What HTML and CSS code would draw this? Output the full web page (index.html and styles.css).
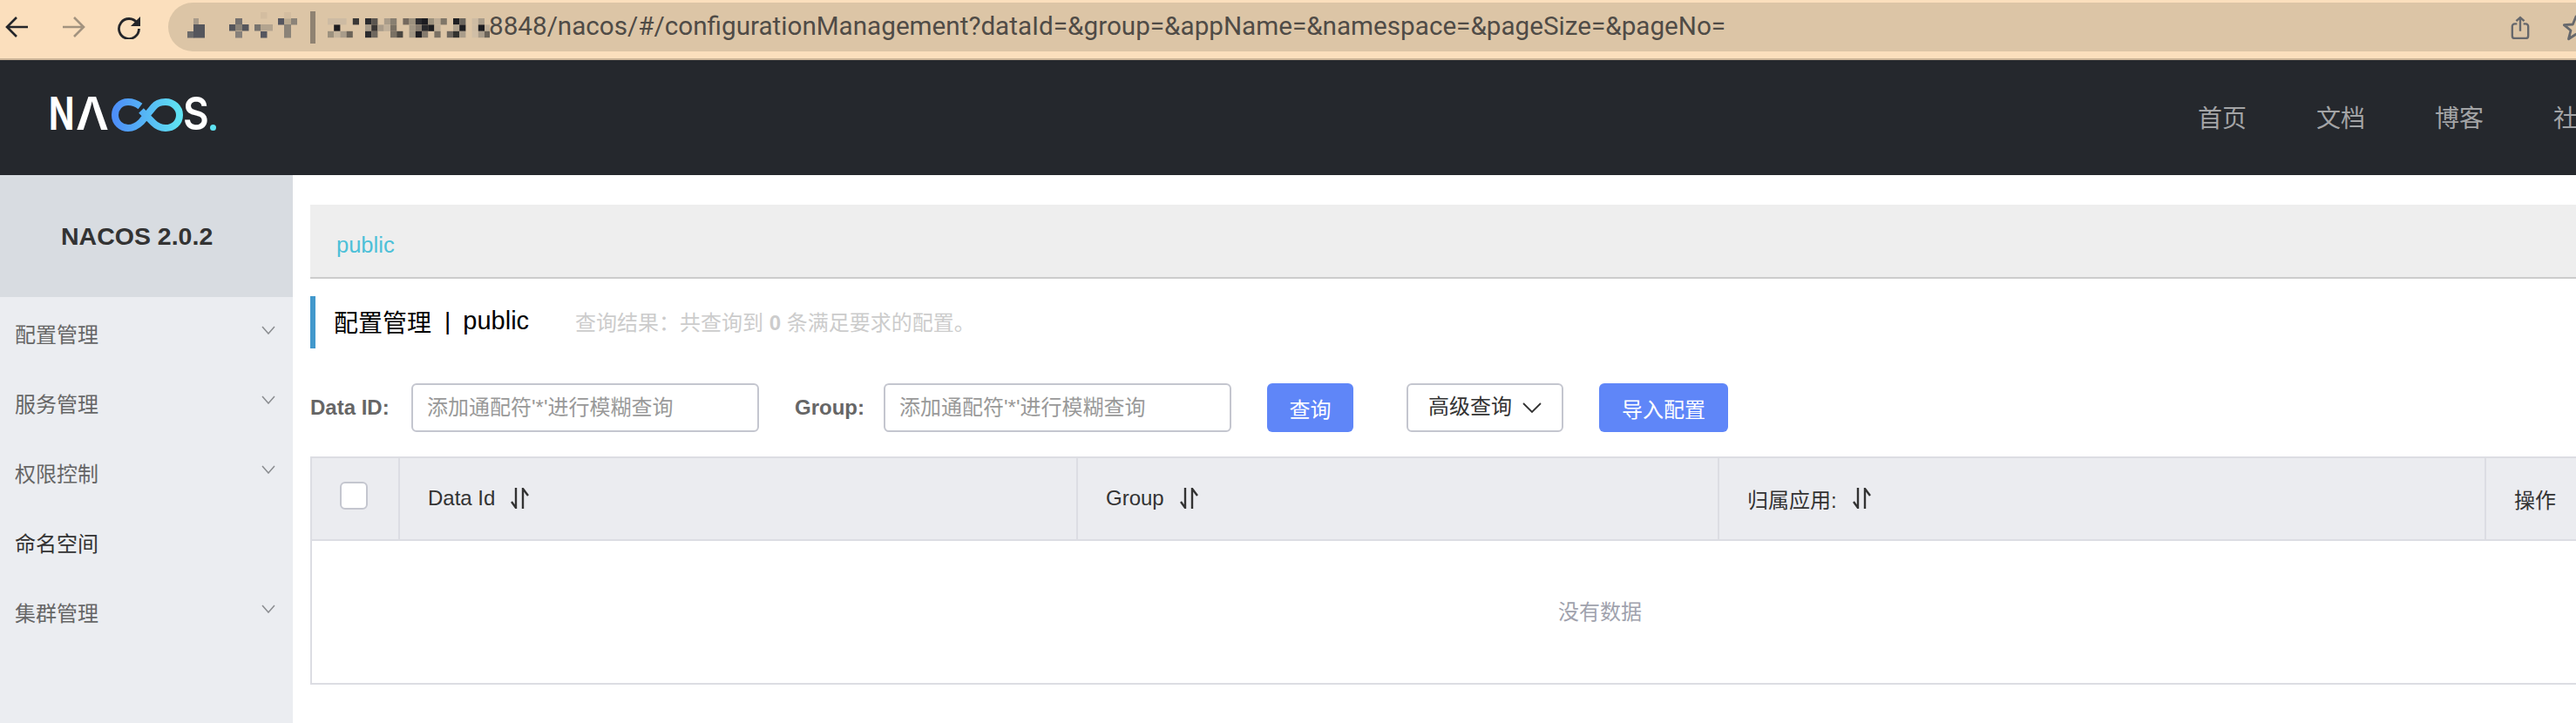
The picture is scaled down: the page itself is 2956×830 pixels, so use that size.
FILE: index.html
```html
<!DOCTYPE html>
<html lang="zh-CN">
<head>
<meta charset="utf-8">
<title>Nacos</title>
<link rel="stylesheet" href="styles.css">
</head>
<body>
<div class="app">
  <div class="browser">
    <div class="nav-icons">
      <svg class="bicon" viewBox="0 0 28 28"><path d="M26 14H2M13 3L2 14l11 11" fill="none" stroke="#25262a" stroke-width="2.6"/></svg>
      <svg class="bicon" viewBox="0 0 28 28"><path d="M2 14h24M15 3l11 11-11 11" fill="none" stroke="#a3937f" stroke-width="2.6"/></svg>
      <svg class="bicon" viewBox="0 0 28 28"><path d="M23.5 9.5A11.5 11.5 0 1 0 25.5 16" fill="none" stroke="#25262a" stroke-width="2.8"/><path d="M27 2v11H16z" fill="#25262a"/></svg>
    </div>
    <div class="omnibox">
      <svg class="mosaic" width="369" height="70" viewBox="193 0 369 70">
        <rect x="215" y="36" width="7.5" height="7.5" fill="#6b6a6a"/><rect x="222" y="21" width="6" height="7.5" fill="#a89b8a"/><rect x="222" y="28" width="13" height="15.5" fill="#55565c"/>
        <rect x="270" y="21" width="8" height="7.5" fill="#74706e"/><rect x="263" y="28" width="7.5" height="7.5" fill="#55565c"/><rect x="270" y="28" width="8" height="7.5" fill="#8b8378"/><rect x="278" y="28" width="7.5" height="7.5" fill="#55565c"/><rect x="270" y="36" width="8" height="7.5" fill="#86807a"/>
        <rect x="292" y="28" width="7.5" height="7.5" fill="#77736e"/><rect x="299" y="28" width="14" height="7.5" fill="#b3a48f"/><rect x="299" y="36" width="7.5" height="7.5" fill="#55565f"/><rect x="299" y="14" width="7.5" height="7.5" fill="#d3bda0"/>
        <rect x="319" y="21" width="7.5" height="7.5" fill="#55565f"/><rect x="326" y="21" width="8" height="7.5" fill="#b8a88f"/><rect x="334" y="21" width="7" height="7.5" fill="#8b8378"/><rect x="326" y="28" width="8" height="15.5" fill="#8b8378"/><rect x="326" y="14" width="8" height="7.5" fill="#d3bda0"/>
        <rect x="356" y="13" width="6" height="37" fill="#8f8272"/>
        <rect x="376" y="21" width="21.6" height="7.4" fill="#cdbba3"/><rect x="404.8" y="21" width="7.2" height="7.4" fill="#3a3837"/><rect x="419" y="21" width="7.2" height="7.4" fill="#2b2b2e"/><rect x="426.2" y="21" width="7.2" height="7.4" fill="#5a554f"/><rect x="440.8" y="21" width="7.2" height="7.4" fill="#a99c8a"/><rect x="448" y="21" width="7.2" height="7.4" fill="#887f71"/><rect x="462.4" y="21" width="7.2" height="7.4" fill="#74695e"/><rect x="469.6" y="21" width="7.2" height="7.4" fill="#9c917e"/><rect x="476.8" y="21" width="7.2" height="7.4" fill="#2b2b2e"/><rect x="484" y="21" width="7.2" height="7.4" fill="#1c1c20"/><rect x="491.2" y="21" width="7.2" height="7.4" fill="#9c917e"/><rect x="498.4" y="21" width="7.2" height="7.4" fill="#bfae97"/><rect x="505.6" y="21" width="7.2" height="7.4" fill="#7f7668"/><rect x="520" y="21" width="7.2" height="7.4" fill="#1f1f22"/><rect x="527.2" y="21" width="7.2" height="7.4" fill="#6b655d"/><rect x="541.6" y="21" width="7.2" height="7.4" fill="#cdbba3"/><rect x="548.8" y="21" width="7.2" height="7.4" fill="#a99c8a"/>
        <rect x="383.2" y="28.4" width="7.2" height="7.4" fill="#1c1c20"/><rect x="419" y="28.4" width="7.2" height="7.4" fill="#a99c8a"/><rect x="426.2" y="28.4" width="7.2" height="7.4" fill="#3a3634"/><rect x="433.4" y="28.4" width="7.2" height="7.4" fill="#a99c8a"/><rect x="440.8" y="28.4" width="7.2" height="7.4" fill="#c0b09a"/><rect x="448" y="28.4" width="7.2" height="7.4" fill="#7a7164"/><rect x="469.6" y="28.4" width="7.2" height="7.4" fill="#a09583"/><rect x="476.8" y="28.4" width="7.2" height="7.4" fill="#857b6e"/><rect x="484" y="28.4" width="7.2" height="7.4" fill="#2a2a2c"/><rect x="491.2" y="28.4" width="7.2" height="7.4" fill="#1e1e22"/><rect x="498.4" y="28.4" width="7.2" height="7.4" fill="#bfae97"/><rect x="520" y="28.4" width="7.2" height="7.4" fill="#b3a48f"/><rect x="527.2" y="28.4" width="7.2" height="7.4" fill="#1f1f22"/><rect x="541.6" y="28.4" width="7.2" height="7.4" fill="#cdbba3"/><rect x="548.8" y="28.4" width="7.2" height="7.4" fill="#1c1c20"/><rect x="556" y="28.4" width="6" height="7.4" fill="#bfae97"/>
        <rect x="376" y="35.8" width="7.2" height="7.4" fill="#9c917e"/><rect x="383.2" y="35.8" width="7.2" height="7.4" fill="#c4b49c"/><rect x="390.4" y="35.8" width="7.2" height="7.4" fill="#a99c8a"/><rect x="397.6" y="35.8" width="7.2" height="7.4" fill="#6b6358"/><rect x="419" y="35.8" width="7.2" height="7.4" fill="#2b2b2e"/><rect x="426.2" y="35.8" width="7.2" height="7.4" fill="#6e675e"/><rect x="448" y="35.8" width="7.2" height="7.4" fill="#7a7164"/><rect x="455.2" y="35.8" width="7.2" height="7.4" fill="#4a4640"/><rect x="469.6" y="35.8" width="7.2" height="7.4" fill="#a09583"/><rect x="476.8" y="35.8" width="7.2" height="7.4" fill="#1e1e22"/><rect x="484" y="35.8" width="7.2" height="7.4" fill="#857b6e"/><rect x="498.4" y="35.8" width="7.2" height="7.4" fill="#7a7164"/><rect x="512.8" y="35.8" width="7.2" height="7.4" fill="#6e675e"/><rect x="520" y="35.8" width="7.2" height="7.4" fill="#33322f"/><rect x="527.2" y="35.8" width="7.2" height="7.4" fill="#a99c8a"/><rect x="541.6" y="35.8" width="7.2" height="7.4" fill="#d0bea6"/><rect x="548.8" y="35.8" width="7.2" height="7.4" fill="#a99c8a"/><rect x="556" y="35.8" width="6" height="7.4" fill="#6b6358"/>
      </svg>
      <span class="url">8848/nacos/#/configurationManagement?dataId=&amp;group=&amp;appName=&amp;namespace=&amp;pageSize=&amp;pageNo=</span>
      <svg class="share" viewBox="0 0 24 30"><path d="M8 10H5a3 3 0 0 0-3 3v12a3 3 0 0 0 3 3h14a3 3 0 0 0 3-3V13a3 3 0 0 0-3-3h-3M12 19V2M7 6.5L12 2l5 4.500" fill="none" stroke="#66686c" stroke-width="2.6"/></svg>
      <svg class="star" viewBox="0 0 30 30"><path d="M15 2l3.700 9.500 10 .6-7.700 6.400 2.500 9.700L15 22.300 6.500 27.700 9 18 1.300 11.600l10-.6z" fill="none" stroke="#66686c" stroke-width="2.800" stroke-linejoin="round"/></svg>
    </div>
  </div>

  <header class="topbar">
    <div class="logo">
      <span class="logo-letter logo-n">N</span>
      <span class="logo-letter logo-a">Λ</span>
      <svg class="logo-inf" viewBox="128 109 82 44">
        <defs><linearGradient id="inf" x1="0" x2="1" y1="0" y2="0"><stop offset="0" stop-color="#4d8ff8"/><stop offset="1" stop-color="#5fe2f2"/></linearGradient></defs>
        <path d="M161 122C157 119 152 117 147 117 138 117 132 124 132 132 132 141 139 147 147 147 153 147 158 144 162 140L176 123C179 119 184 117 190 117 199 117 206 124 206 132 206 141 199 147 190 147 184 147 180 145 176 141L162 127" fill="none" stroke="url(#inf)" stroke-width="8"/>
      </svg>
      <span class="logo-letter logo-s">S</span>
      <span class="logo-dot"></span>
    </div>
    <nav class="topnav">
      <a>首页</a><a>文档</a><a>博客</a><a>社区</a>
    </nav>
  </header>

  <div class="layout">
    <aside class="sidebar">
      <div class="version">NACOS 2.0.2</div>
      <ul class="menu">
        <li class="menu-item"><span>配置管理</span><svg class="chev" viewBox="0 0 16 10"><path d="M1 1l7 8 7-8" fill="none" stroke="#8a8c90" stroke-width="1.500"/></svg></li>
        <li class="menu-item"><span>服务管理</span><svg class="chev" viewBox="0 0 16 10"><path d="M1 1l7 8 7-8" fill="none" stroke="#8a8c90" stroke-width="1.500"/></svg></li>
        <li class="menu-item"><span>权限控制</span><svg class="chev" viewBox="0 0 16 10"><path d="M1 1l7 8 7-8" fill="none" stroke="#8a8c90" stroke-width="1.500"/></svg></li>
        <li class="menu-item leaf"><span>命名空间</span></li>
        <li class="menu-item"><span>集群管理</span><svg class="chev" viewBox="0 0 16 10"><path d="M1 1l7 8 7-8" fill="none" stroke="#8a8c90" stroke-width="1.500"/></svg></li>
      </ul>
    </aside>

    <main class="content">
      <div class="tabs"><span class="tab">public</span></div>
      <div class="title">
        <span class="title-main">配置管理</span><span class="title-sep">|</span><span class="title-ns">public</span>
        <span class="result">查询结果：共查询到 <b>0</b> 条满足要求的配置。</span>
      </div>
      <div class="search">
        <label class="lbl lbl-id">Data ID:</label>
        <div class="field">添加通配符'*'进行模糊查询</div>
        <label class="lbl lbl-group">Group:</label>
        <div class="field">添加通配符'*'进行模糊查询</div>
        <button class="btn primary btn-query">查询</button>
        <button class="btn normal btn-adv"><span class="adv-text">高级查询</span><svg class="adv-chev" viewBox="0 0 22 12"><path d="M1 1l10 10L21 1" fill="none" stroke="#333" stroke-width="1.800"/></svg></button>
        <button class="btn primary btn-import">导入配置</button>
      </div>
      <div class="table">
        <div class="thead">
          <div class="th th-check"><span class="checkbox"></span></div>
          <div class="th">Data Id<svg class="sort" viewBox="0 0 21 24"><path d="M6 0v23L1 16M14 24V1l6 8" fill="none" stroke="#333" stroke-width="2.400"/></svg></div>
          <div class="th">Group<svg class="sort" viewBox="0 0 21 24"><path d="M6 0v23L1 16M14 24V1l6 8" fill="none" stroke="#333" stroke-width="2.400"/></svg></div>
          <div class="th">归属应用:<svg class="sort" viewBox="0 0 21 24"><path d="M6 0v23L1 16M14 24V1l6 8" fill="none" stroke="#333" stroke-width="2.400"/></svg></div>
          <div class="th">操作</div>
        </div>
        <div class="tbody">没有数据</div>
      </div>
    </main>
  </div>
</div>
</body>
</html>
```
FILE: styles.css
```css
* { box-sizing: border-box; }
html, body { margin: 0; padding: 0; height: 830px; overflow: hidden; background: #fff; }
body { font-family: "Liberation Sans", "Noto Sans CJK SC", sans-serif; font-size: 24px; color: #333; }
.app { width: 3314px; height: 830px; display: flex; flex-direction: column; }

.browser { height: 69px; flex: none; display: flex; background: #fbdfbd; border-bottom: 2px solid #c9b296; padding-top: 3px; }
.nav-icons { width: 193px; flex: none; display: flex; gap: 36px; padding: 14px 0 0 6px; align-items: flex-start; }
.bicon { width: 28px; height: 28px; flex: none; }
.omnibox { position: relative; width: 3121px; height: 56px; background: #dcc5a6; border-radius: 28px 0 0 28px; }
.mosaic { position: absolute; left: 0; top: -3px; }
.url { position: absolute; left: 368px; top: 12px; line-height: 30px; font-family: "Roboto", "Liberation Sans", sans-serif; font-size: 29.650px; color: #4f4b46; white-space: nowrap; }
.share { position: absolute; left: 2688px; top: 15px; width: 22px; height: 28px; }
.star { position: absolute; left: 2748px; top: 14px; width: 30px; height: 30px; }

.topbar { height: 132px; flex: none; display: flex; background: #25282d; padding-left: 56px; padding-right: 328px; }
.logo { height: 44px; margin-top: 40px; flex: none; display: flex; }
.logo-letter { display: block; height: 44px; line-height: 44px; font-family: "Inter", "Liberation Sans", sans-serif; font-weight: 600; font-size: 52px; color: #fff; transform-origin: left center; }
.logo-n { width: 28px; font-weight: 700; transform: scaleX(.74); }
.logo-a { width: 36px; margin-left: 3px; }
.logo-s { width: 29px; transform: scaleX(.88); }
.logo-inf { width: 82px; height: 44px; margin-left: 5px; flex: none; }
.logo-dot { width: 7px; height: 7px; border-radius: 50%; background: #5fe2f2; margin: 34px 0 0 2px; }
.topnav { margin-left: auto; display: flex; gap: 80px; align-items: center; height: 132px; padding-bottom: 3px; }
.topnav a { font-family: "Noto Sans CJK SC", sans-serif; font-size: 28px; color: #a3a4a6; }

.layout { flex: 1; display: flex; min-height: 0; }
.sidebar { width: 336px; flex: none; background: #ebedf1; }
.version { height: 140px; background: #d8dce1; display: flex; align-items: center; padding: 0 0 0 70px; font-weight: 700; font-size: 28.500px; color: #333; }
.menu { list-style: none; margin: 0; padding: 0; }
.menu-item { height: 80px; display: flex; align-items: center; justify-content: space-between; padding: 2px 20px 0 17px; font-family: "Noto Sans CJK SC", sans-serif; font-size: 24px; color: #666; }
.menu-item.leaf { color: #333; }
.chev { width: 16px; height: 10px; margin-bottom: 6px; }

.content { flex: 1; padding: 34px 0 0 20px; }
.tabs { height: 85px; background: #eee; border-bottom: 2px solid #ccc; padding: 29px 0 0 30px; }
.tab { font-size: 25.500px; line-height: 34px; color: #4cc0d8; }
.title { height: 60px; margin-top: 20px; border-left: 6px solid #4298cc; padding: 0 0 3px 21px; display: flex; align-items: center; font-family: "Liberation Sans", "Noto Sans CJK SC", sans-serif; font-size: 28px; color: #000; }
.title-sep { margin: 0 14px 0 15px; }
.title-ns { font-size: 29px; }
.result { margin-left: 53px; font-size: 24px; color: #ccc; }
.search { height: 56px; margin-top: 40px; display: flex; align-items: center; }
.lbl { font-weight: 700; font-size: 24px; color: #666; padding-bottom: 1px; }
.lbl-id { width: 116px; }
.lbl-group { margin-left: 41px; width: 102px; }
.field { width: 399px; height: 56px; border: 2px solid #c4c6cf; border-radius: 6px; padding: 0 0 6px 16px; font-family: "Liberation Sans", "Noto Sans CJK SC", sans-serif; font-size: 24px; color: #999; display: flex; align-items: center; }
.btn { height: 56px; border-radius: 6px; font-family: "Noto Sans CJK SC", sans-serif; font-size: 24px; padding: 0; display: flex; align-items: center; justify-content: center; }
.primary { background: #5f86f8; color: #fff; border: 0; }
.normal { background: #fff; color: #333; border: 2px solid #c4c6cf; }
.btn-query { width: 99px; margin-left: 41px; }
.btn-adv { width: 180px; margin-left: 61px; gap: 12px; }
.adv-text { margin-bottom: 8px; }
.adv-chev { width: 22px; height: 12px; margin-top: -1px; }
.btn-import { width: 148px; margin-left: 41px; }

.table { width: 2958px; margin-top: 28px; border: 2px solid #dcdde3; border-right: 0; }
.thead { height: 95px; display: grid; grid-template-columns: 99px 778px 736px 880px 463px; background: #ebecf0; border-bottom: 2px solid #dcdde3; }
.th { display: flex; align-items: center; padding: 0 0 1px 32px; border-left: 2px solid #dcdde3; font-size: 24px; color: #333; }
.th-check { border-left: 0; padding-left: 32px; }
.checkbox { width: 32px; height: 32px; background: #fff; border: 2px solid #c4c6cf; border-radius: 6px; margin-bottom: 7px; }
.sort { width: 21px; height: 24px; margin-left: 18px; margin-bottom: 1px; }
.tbody { height: 163px; display: flex; align-items: center; justify-content: center; padding-bottom: 4px; color: #a0a2ad; font-size: 24px; font-family: "Noto Sans CJK SC", sans-serif; }
```
